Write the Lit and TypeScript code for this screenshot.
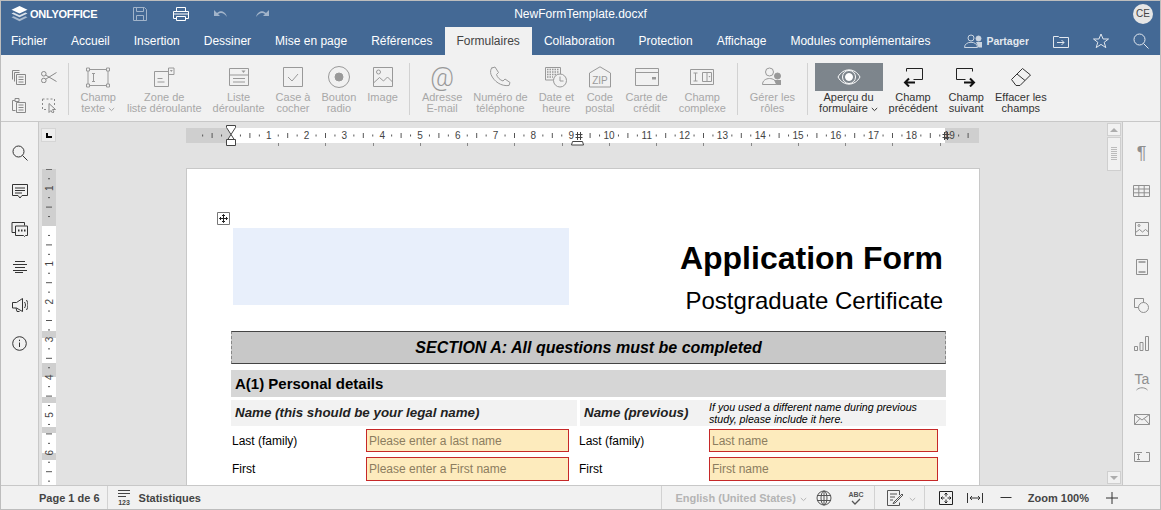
import {css, html, svg, LitElement} from "lit";
import {customElement} from "lit/decorators.js";

const ico = (w: number, h: number, body: unknown) => html`<svg class="ico" width=${w} height=${h} viewBox="0 0 ${w} ${h}" fill="none" stroke="currentColor" stroke-width="1">${body}</svg>`;

const chevron = html`<svg class="chev" width="7" height="5" viewBox="0 0 7 5" fill="none" stroke="currentColor"><path d="M.8 1l2.700 2.600L6.200 1"/></svg>`;

const icons: Record<string, unknown> = {
    logo: ico(17, 16, svg`<path d="M8.500 0l8 3.800-8 3.800-8-3.800z" fill="#fff" stroke="none"/><path d="M2.600 6.500l5.900 2.800 5.900-2.800 2.100 1-8 3.800-8-3.800z" fill="#fff" fill-opacity=".8" stroke="none"/><path d="M2.600 10.300l5.900 2.800 5.900-2.800 2.100 1-8 3.900-8-3.900z" fill="#fff" fill-opacity=".55" stroke="none"/>`),
    save: ico(16, 16, svg`<path d="M1.500 1.500h11l2 2v11h-13zM4.500 1.500v4h7v-4M4.500 14.500v-5h7v5"/>`),
    print: ico(18, 16, svg`<path d="M4.500 5V1.500h9V5M4.500 12.500h-3v-7h15v7h-3M4.500 10.500h9v4h-9zM1.500 8h15"/>`),
    undo: ico(16, 10, svg`<path d="M1 1v6h6L5 5c3-2 6-1 9 3-1-5-6-8-10-4z" fill="currentColor" stroke="none"/>`),
    redo: ico(16, 10, svg`<path d="M15 1v6H9l2-2c-3-2-6-1-9 3 1-5 6-8 10-4z" fill="currentColor" stroke="none"/>`),
    share: ico(20, 14, svg`<circle cx="8" cy="4" r="3"/><path d="M1.500 13.500c0-7 13-7 13 0z"/><circle cx="15.500" cy="4.500" r="2.500" fill="currentColor"/><path d="M13 8h6v5.500h-3.500z" fill="currentColor" stroke="none"/>`),
    move: ico(16, 14, svg`<path d="M.5 2.500h5l1 1h9v10h-15zM4 8.500h7M8.500 6l2.500 2.500-2.500 2.500"/>`),
    star: ico(16, 16, svg`<path d="M8 1l2.100 5h5.400l-4.300 3.300 1.600 5.300L8 11.400l-4.800 3.200 1.600-5.300L.5 6h5.400z"/>`),
    search: ico(16, 16, svg`<circle cx="6.500" cy="6.500" r="5.500"/><path d="M10.500 10.500l5 5"/>`),
    copy: ico(16, 16, svg`<path d="M1.500 10.500v-9h7M3.500 12.500v-9h5M5.500 5.500h9v10h-9zM7.500 8h5M7.500 10.500h5M7.500 13h5"/>`),
    cut: ico(16, 12, svg`<circle cx="2.800" cy="2.800" r="2.300"/><circle cx="2.800" cy="9.500" r="2.300"/><path d="M4.500 4l11 6.500M4.500 8.300l11-6.800"/>`),
    paste: ico(16, 16, svg`<path d="M4 3.500H1.500v10h3M4 1.500h4v3H4zM5.500 5.500h9v10h-9zM7.500 8h5M7.500 10.500h5M7.500 13h5"/>`),
    select: ico(16, 16, svg`<path d="M1.500 2v10.500h5M1.500 2h12v6" stroke-dasharray="2 2"/><path d="M8 6.500v9l2-2 1.500 2.500 1.500-1-1.500-2.500h3z"/>`),
    field: ico(26, 22, svg`<path d="M3 3.500h20v16H3z"/><path d="M1.500 2h3v3h-3zM21.500 2h3v3h-3zM1.500 18h3v3h-3zM21.500 18h3v3h-3z" fill="#f1f1f1"/><path d="M7 7.500h3M8.500 7.500v8M7 15.500h3"/>`),
    combo: ico(22, 20, svg`<path d="M15.500 5.500V19.500h-14v-15h14M15.500 1h5.500v6.500h-5.500M15.500 1v6.500"/><path d="M16.800 3h3l-1.500 2z" fill="currentColor" stroke="none"/><path d="M4.500 11.500h5M4.500 15h7"/>`),
    list: ico(22, 20, svg`<path d="M1.500 1.500h19v17h-19zM1.500 8h19M5 11.500h12M5 15h12"/><path d="M13.500 3.500h4l-2 2.500z" fill="currentColor" stroke="none"/>`),
    check: ico(22, 22, svg`<path d="M1.500 1.500h19v19h-19zM6 11l4 4 6-7"/>`),
    radio: ico(24, 24, svg`<circle cx="12" cy="12" r="10.500"/><circle cx="12" cy="12" r="4" fill="currentColor"/>`),
    image: ico(22, 22, svg`<path d="M1.500 1.500h19v19h-19z"/><circle cx="6.500" cy="6" r="2"/><path d="M1.500 17l6-5.500 4 3.500 4-4 5 5"/>`),
    phone: ico(22, 22, svg`<path d="M3 1.500l3-1 3.500 5.500-2 2c.8 3 3.500 5.500 6.500 6.500l2-2 5 3.500-1 3c-8 1-15-4-18-11-.8-2.500-.5-5 1-7z" transform="translate(0 .5)"/>`),
    date: ico(24, 22, svg`<path d="M1.500 1.500h15v12.500h-15z"/><path d="M3 3.500h12M3 6h12M3 8.500h12M3 11h6" stroke-dasharray="1.500 1" stroke-width="1.500"/><circle cx="16" cy="14.500" r="6.500" fill="#f1f1f1"/><path d="M16 10.500v4.500h3.500"/>`),
    zip: ico(24, 22, svg`<path d="M1.500 21h21V7L12 .8 1.500 7z"/><text x="12" y="18" text-anchor="middle" font-family="Liberation Sans" font-size="10" fill="currentColor" stroke="none">ZIP</text>`),
    card: ico(26, 20, svg`<path d="M1.500 1.500h23v17h-23zM1.500 5.500h23"/><path d="M18 10h4v2.500h-4z" fill="currentColor" stroke="none"/>`),
    complex: ico(26, 18, svg`<path d="M1.500 1.500h23v15h-23zM13.500 4.500h9v9h-9zM18 4.500v9M4.500 5h4M6.500 5v8M4.500 13h4"/><path d="M19.500 8h2l-1 1.500z" fill="currentColor" stroke="none"/>`),
    roles: ico(22, 20, svg`<circle cx="8.500" cy="5" r="4"/><path d="M1.500 17.500c0-8 14-8 14 0z"/><circle cx="16.500" cy="9" r="3" fill="currentColor"/><path d="M13 13h7v5h-4.500z" fill="currentColor" stroke="none"/>`),
    eye: ico(24, 18, svg`<path d="M1 9c5-9.500 17-9.500 22 0-5 9.500-17 9.500-22 0z"/><circle cx="12" cy="9" r="6.500"/><circle cx="12" cy="9" r="3.500" fill="currentColor"/>`),
    prev: ico(22, 20, svg`<path d="M4.500 1.500h16v11h-9" stroke="#222"/><path d="M4.500 1.500v3" stroke="#222"/><path d="M13 15.500H3M7 11.500l-4 4 4 4" stroke="#111" stroke-width="2"/>`),
    next: ico(22, 20, svg`<path d="M17.500 1.500h-16v11h9" stroke="#222"/><path d="M17.500 1.500v3" stroke="#222"/><path d="M9 15.500h10M15 11.500l4 4-4 4" stroke="#111" stroke-width="2"/>`),
    eraser: ico(22, 20, svg`<path d="M1.500 12.500L12.500 1.500l8 6.500-10.500 10.500H6z"/><path d="M7 7l8 6.500"/>`),
    comment: ico(16, 15, svg`<path d="M.5.500h15v11h-5.500l-2 2.500-2-2.500H.5zM3 4h10M3 6.500h10M3 9h7"/>`),
    chat: ico(17, 15, svg`<path d="M4.500 10.500H1V.500h12.500v3"/><path d="M4.500 4h12v9.500h-2l-1 1-1-1h-8z" fill="#f1f1f1"/><path d="M7 8.500h1.500M10 8.500h1.500M13 8.500h1.500" stroke-width="2"/>`),
    lines: ico(14, 12, svg`<path d="M2 .5h10M0 3.500h14M2 6.500h10M0 9.500h14M2 11.500h8"/>`),
    speaker: ico(16, 14, svg`<path d="M.5 4.500h4l6-4v13l-6-3.500h-4zM4 10l1 3.500h2.500M12.500 4c1.300 1.800 1.300 4.200 0 6M14.500 2c2 3 2 7 0 10"/>`),
    info: ico(15, 15, svg`<circle cx="7.500" cy="7.500" r="6.800"/><path d="M7.500 6.500v4.500M7.500 3.700v1.400"/>`),
    table: ico(17, 12, svg`<path d="M.5.500h16v11H.5zM.5 4h16M.5 7.800h16M5.800.5v11M11.200.5v11"/>`),
    rimage: ico(14, 14, svg`<path d="M.5.500h13v13H.5z"/><circle cx="4" cy="3.500" r="1"/><path d="M.5 10.500l4-3 3 2.500 3-2.500 3 2.500"/>`),
    header: ico(12, 16, svg`<path d="M.5.500h11v15H.5z"/><path d="M2.500 3h7M2.500 13h7" stroke-width="1.500"/>`),
    shape: ico(15, 15, svg`<path d="M.5.500h9v9h-9z"/><circle cx="9.500" cy="9.500" r="5" fill="#f1f1f1"/>`),
    chart: ico(15, 15, svg`<path d="M.5 10.500h3v4h-3zM6 6.500h3v8H6zM11.500.5h3v14h-3z"/>`),
    ta: ico(20, 20, svg`<text x="10" y="13" text-anchor="middle" font-family="Liberation Sans" font-size="14" fill="currentColor" stroke="none">Ta</text><path d="M4.500 19c3-3 8-3 11 0"/>`),
    mail: ico(16, 11, svg`<path d="M.5.500h15v10H.5zM.5.500l7.500 5.500 7.500-5.500M.5 10.500l5.500-6M15.500 10.500L10 4.500"/>`),
    form: ico(16, 10, svg`<path d="M.5.500h15v9H.5z"/><path d="M3 2.500h3M4.500 2.500v5M3 7.500h3"/><path d="M8 .5h4" stroke="#f1f1f1"/>`),
    stats: ico(13, 15, svg`<path d="M0 .5h12M0 3.500h12M0 6.500h8"/><text x="6" y="14.500" text-anchor="middle" font-family="Liberation Sans" font-size="7" fill="currentColor" stroke="none">123</text>`),
    globe: ico(16, 16, svg`<circle cx="8" cy="8" r="7"/><ellipse cx="8" cy="8" rx="3" ry="7"/><path d="M1 5.500h14M1 10.500h14M8 1v14"/>`),
    spell: ico(16, 16, svg`<text x="8" y="7" text-anchor="middle" font-family="Liberation Sans" font-size="7" fill="currentColor" stroke="none">ABC</text><path d="M4 11l3 3 5-5" stroke-width="1.300"/>`),
    edit: ico(16, 16, svg`<path d="M12.500 5V.5h-12v15h12v-3M3 4h7M3 7h5M3 10h3"/><path d="M7 12l8-8 1 1-8 8-2 .5z"/>`),
    fitpage: ico(14, 14, svg`<path d="M.5.500h13v13H.5zM7 2.500v3M5.500 3.500L7 2l1.500 1.500M7 11.500v-3M5.500 10.500L7 12l1.500-1.500M2.500 7h3M3.500 5.500L2 7l1.500 1.500M11.500 7h-3M10.500 5.500L12 7l-1.500 1.500"/>`),
    fitwidth: ico(16, 12, svg`<path d="M.5 1v10M15.500 1v10M3 6h10M5 4L3 6l2 2M11 4l2 2-2 2"/>`),
    minus: ico(12, 3, svg`<path d="M.5 1.500h11"/>`),
    plus: ico(12, 12, svg`<path d="M0 6h12M6 0v12"/>`),
    moveTable: ico(13, 13, svg`<path d="M.5.500h12v12H.5z" stroke="#777"/><path d="M6.500 2.500v8M2.500 6.500h8M5 4l1.500-1.500L8 4M5 9l1.500 1.500L8 9M4 5L2.500 6.500 4 8M9 5l1.500 1.500L9 8" stroke="#222"/>`),
};

type Tool = {icon: string; lines: string[]; chevron?: boolean};

const formTools: Tool[][] = [
    [
        {icon: "field", lines: ["Champ", "texte"], chevron: true},
        {icon: "combo", lines: ["Zone de", "liste déroulante"]},
        {icon: "list", lines: ["Liste", "déroulante"]},
        {icon: "check", lines: ["Case à", "cocher"]},
        {icon: "radio", lines: ["Bouton", "radio"]},
        {icon: "image", lines: ["Image"]},
    ],
    [
        {icon: "at", lines: ["Adresse", "E-mail"]},
        {icon: "phone", lines: ["Numéro de", "téléphone"]},
        {icon: "date", lines: ["Date et", "heure"]},
        {icon: "zip", lines: ["Code", "postal"]},
        {icon: "card", lines: ["Carte de", "crédit"]},
        {icon: "complex", lines: ["Champ", "complexe"]},
    ],
    [{icon: "roles", lines: ["Gérer les", "rôles"]}],
];

const tabs = ["Fichier", "Accueil", "Insertion", "Dessiner", "Mise en page", "Références", "Formulaires", "Collaboration", "Protection", "Affichage", "Modules complémentaires"];
const leftIcons = ["search", "comment", "chat", "lines", "speaker", "info"];
const rightIcons = ["para", "table", "rimage", "header", "shape", "chart", "ta", "mail", "form"];

const CM = 37.8;

// table column marker, the hatched one on the ruler
const hatch = (x: number) => svg`<path d="M${x - 1.500} 4v8M${x + 1.500} 4v8M${x - 3.500} 6.500h7M${x + -3.500} 9.500h7" stroke="#444"/>`;

function hRuler() {
    const marks = [];
    for (let q = -3; q <= 78; q++) {
        const x = 45 + q * CM / 4;
        if (x > 790) break;
        if (q % 4 === 0) {
            const n = Math.abs(q / 4);
            if (n > 0) marks.push(svg`<text x=${x} y="11" text-anchor="middle">${n}</text>`);
        } else {
            const h = q % 2 === 0 ? 5 : 2;
            marks.push(svg`<path d="M${x} ${7.500 - h / 2}v${h}" stroke="#555"/>`);
        }
    }
    for (let i = 1; i < 16; i++) {
        const x = Math.round(45 + i * 47.24) + .5;
        marks.push(svg`<path d="M${x} 15v3" stroke="#888"/>`);
    }
    return html`<svg class="hruler" width="794" height="15" viewBox="0 0 794 15" font-family="Liberation Sans" font-size="10" fill="#444">
        <rect width="793" height="15" fill="#cfcfcf"/>
        <rect x="45" width="714" height="15" fill="#fff"/>
        ${marks}
        <path d="M40.500 -2.500h9v2l-4.500 7 4.500 7v3h-9v-3l4.500-7-4.500-7z" fill="#fff" stroke="#444"/>
        <path d="M40.500 11.500h9v6h-9z" fill="#fff" stroke="#444"/>
        ${hatch(393)}
        <path d="M386.500 13.500h10l1 3.500h-12z" fill="#fff" stroke="#444"/>
        ${hatch(760)}
    </svg>`;
}

function vRuler() {
    const marks = [];
    const origin = 57;
    for (let q = -6; q <= 27; q++) {
        const y = origin + q * CM / 4;
        if (q % 4 === 0) {
            const n = Math.abs(q / 4);
            if (n > 0) marks.push(svg`<text transform="translate(10.500 ${y}) rotate(-90)" text-anchor="middle">${n}</text>`);
        } else {
            const w = q % 2 === 0 ? 6 : 2;
            marks.push(svg`<path d="M${7 - w / 2} ${y}h${w}" stroke="#555"/>`);
        }
    }
    const bands = [[162, 7], [194, 14], [228, 6], [258, 6], [284, 7]];
    return html`<svg class="vruler" width="14" height="316" viewBox="0 0 14 316" font-family="Liberation Sans" font-size="10" fill="#444">
        <rect width="14" height="316" fill="#fff"/>
        <rect width="14" height="57" fill="#cfcfcf"/>
        ${bands.map(([y, h]) => svg`<rect y=${y} width="14" height=${h} fill="#cfcfcf"/>`)}
        ${marks}
    </svg>`;
}

@customElement('app-root')
class AppRoot extends LitElement {
    static styles = css`
    :host {
        display: flex;
        flex-direction: column;
        box-sizing: border-box;
        width: 1161px;
        height: 510px;
        overflow: hidden;
        border: 1px solid #bdbdbd;
        font-family: "Liberation Sans", Arial, sans-serif;
        font-size: 11px;
        color: #444;
        background: #f1f1f1;
    }

    .ico {
        display: block;
        flex: none;
    }

    .chev {
        display: inline-block;
        margin-left: 3px;
        vertical-align: 0;
    }

    .head {
        background: #446995;
        color: #fff;
    }

    .title {
        height: 26px;
        display: grid;
        grid-template-columns: 1fr auto 1fr;
        align-items: center;
    }

    .title-left {
        display: flex;
        align-items: center;
    }

    .logo {
        display: flex;
        align-items: center;
        gap: 2px;
        margin-left: 10px;
        width: 110px;
        font-size: 11px;
        letter-spacing: -.25px;
        font-weight: 700;
    }

    .quick {
        display: flex;
        align-items: center;
    }

    .quick .faded {
        opacity: .5;
    }

    .docname {
        font-size: 12px;
    }

    .avatar {
        justify-self: end;
        width: 20px;
        height: 20px;
        margin-right: 7px;
        border-radius: 50%;
        background: #e6e6e6;
        color: #444;
        font-size: 10px;
        line-height: 20px;
        text-align: center;
    }

    .tabbar {
        height: 28px;
        display: flex;
        align-items: stretch;
        font-size: 12px;
        margin-left: -2px;
    }

    .tab {
        padding: 0 12px;
        line-height: 28px;
    }

    .tab.on {
        background: #f1f1f1;
        color: #444;
    }

    .tab-actions {
        margin-left: auto;
        display: flex;
        align-items: center;
    }

    .share {
        display: flex;
        align-items: center;
        gap: 3px;
        font-size: 10.500px;
        font-weight: 700;
        opacity: .85;
        margin-right: 24px;
    }

    .tab-actions .ico {
        opacity: .85;
    }

    .toolbar {
        flex: none;
        height: 67px;
        box-sizing: border-box;
        padding-top: 8px;
        display: flex;
        border-bottom: 1px solid #c8c8c8;
    }

    .clip {
        display: grid;
        grid-template-columns: 30px 30px;
        grid-template-rows: 28px 28px;
        justify-items: center;
        align-items: center;
        padding-left: 3px;
        width: 67px;
        box-sizing: border-box;
        opacity: .6;
    }

    .sep {
        flex: none;
        width: 1px;
        height: 52px;
        background: #d2d2d2;
    }

    .group {
        display: flex;
        gap: 11px;
        padding: 0 11.500px;
    }

    .group.last {
        padding: 0 0 0 7px;
    }

    .tool {
        display: flex;
        flex-direction: column;
        align-items: center;
        white-space: nowrap;
    }

    .tool.off {
        color: #a8a8a8;
    }

    .tool.off .pic {
        opacity: .5;
        color: #444;
    }

    .pic {
        width: 100%;
        height: 28px;
        display: flex;
        align-items: center;
        justify-content: center;
    }

    .at {
        font-family: Roboto, "Liberation Sans", sans-serif;
        font-size: 26px;
        font-weight: 300;
        line-height: 28px;
    }

    .lab {
        line-height: 11px;
        text-align: center;
        padding-top: 1px;
    }

    .tool.live {
        color: #333;
    }

    .preview {
        width: 68px;
        margin-right: -5px;
    }

    .preview .pic {
        background: #7d858c;
        color: #fff;
    }

    .main {
        flex: 1;
        min-height: 0;
        display: flex;
    }

    .side {
        flex: none;
        box-sizing: border-box;
        display: flex;
        flex-direction: column;
        align-items: center;
        padding-top: 12px;
    }

    .side > div {
        height: 38px;
        flex: none;
        display: flex;
        align-items: center;
        justify-content: center;
    }

    .side.left {
        width: 38px;
        border-right: 1px solid #c8c8c8;
        color: #333;
    }

    .side.right {
        width: 38px;
        border-left: 1px solid #c8c8c8;
        color: #8f8f8f;
    }

    .glyph {
        font-size: 18px;
    }

    .canvas {
        flex: 1;
        min-width: 0;
        background: #e2e2e2;
        display: grid;
        grid-template-columns: 147px 794px 1fr 14px 1px;
        grid-template-rows: 46px 1fr;
        overflow: hidden;
    }

    .corner {
        width: 15px;
        height: 14px;
        margin: 6px 0 0 2px;
        background: #ececec;
        border: 1px solid #d5d5d5;
        box-sizing: border-box;
        display: flex;
        align-items: center;
        justify-content: center;
    }

    .corner i {
        display: block;
        width: 6px;
        height: 5px;
        border-left: 2px solid #000;
        border-bottom: 2px solid #000;
        box-sizing: border-box;
    }

    .hruler {
        grid-column: 2;
        grid-row: 1;
        display: block;
        margin-top: 6px;
        overflow: visible;
    }

    .vruler {
        grid-column: 1;
        grid-row: 2;
        display: block;
        margin: 1px 0 0 3px;
    }

    .scroll {
        grid-column: 4;
        grid-row: 1 / 3;
        display: flex;
        flex-direction: column;
        padding: 1px 0;
    }

    .scroll b {
        display: flex;
        align-items: center;
        justify-content: center;
        height: 13px;
        box-sizing: border-box;
        background: #f1f1f1;
        border: 1px solid #cfcfcf;
    }

    .scroll b i {
        width: 0;
        height: 0;
        border-left: 4px solid transparent;
        border-right: 4px solid transparent;
    }

    .scroll .up i {
        border-bottom: 4px solid #adadad;
    }

    .scroll .down i {
        border-top: 4px solid #adadad;
    }

    .scroll .thumb {
        margin-top: 1px;
        height: 34px;
        box-sizing: border-box;
        background: #f1f1f1;
        border: 1px solid #cfcfcf;
        display: flex;
        align-items: center;
        justify-content: center;
    }

    .scroll .thumb i {
        width: 6px;
        height: 14px;
        background: repeating-linear-gradient(#bbb 0 1px, transparent 1px 2px);
    }

    .scroll .fill {
        flex: 1;
    }

    .page {
        position: relative;
        grid-column: 2;
        grid-row: 2;
        background: #fff;
        border: 1px solid #c8c8c8;
        border-bottom: 0;
        box-sizing: border-box;
        padding: 59px 33px 0 44px;
        color: #000;
        overflow: hidden;
    }

    .handle {
        position: absolute;
        left: 30px;
        top: 43px;
    }

    .sheet-head {
        display: flex;
        justify-content: space-between;
        height: 103px;
    }

    .placeholder {
        width: 336px;
        height: 77px;
        margin-left: 2px;
        background: #e8effb;
    }

    .heading {
        margin-right: 3px;
        padding-top: 12px;
        text-align: right;
    }

    .heading h1 {
        margin: 0;
        font-size: 32px;
        line-height: 37px;
        font-weight: 700;
    }

    .heading p {
        margin: 10px 0 0;
        font-size: 24px;
        line-height: 28px;
    }

    .section {
        height: 33px;
        box-sizing: border-box;
        background: #c8c8c8;
        border-top: 1px solid #444;
        border-bottom: 1px solid #444;
        border-left: 1px dashed #888;
        border-right: 1px dashed #888;
        text-align: center;
        font-size: 16px;
        line-height: 31px;
        font-weight: 700;
        font-style: italic;
    }

    .sub {
        margin-top: 6px;
        height: 27px;
        background: #d6d6d6;
        padding-left: 4px;
        font-size: 15px;
        line-height: 27px;
        font-weight: 700;
    }

    .names {
        margin-top: 3px;
        display: grid;
        grid-template-columns: 346px 366px;
        gap: 3px;
        height: 26px;
    }

    .names > div {
        background: #f2f2f2;
        font-size: 13.330px;
        line-height: 26px;
        font-weight: 700;
        font-style: italic;
        padding-left: 4px;
        color: #222;
    }

    .names .prev {
        display: grid;
        grid-template-columns: 125px 1fr;
    }

    .names small {
        font-size: 10.670px;
        line-height: 12px;
        font-weight: 400;
        padding-top: 1px;
        white-space: nowrap;
        color: #000;
    }

    .rows {
        margin-top: 3px;
        display: grid;
        grid-template-columns: 134px 203px 140px 229px;
        grid-template-rows: 23px 24px;
        column-gap: 0;
        row-gap: 5px;
        padding-left: 1px;
        font-size: 12px;
    }

    .rows > span {
        align-self: center;
    }

    .rows > span:nth-of-type(2n) {
        padding-left: 10px;
    }

    .rows .input {
        display: flex;
        align-items: center;
        box-sizing: border-box;
        background: #fdebbd;
        border: 1px solid #c62828;
        padding-left: 2px;
        color: #8c7d5f;
    }

    .status {
        flex: none;
        height: 24px;
        box-sizing: border-box;
        border-top: 1px solid #c8c8c8;
        display: flex;
        align-items: center;
        font-weight: 700;
        color: #444;
    }

    .status .vr {
        width: 1px;
        height: 24px;
        background: #d2d2d2;
        flex: none;
    }

    .cell {
        display: flex;
        align-items: center;
    }

    .lang {
        color: #b4b4b4;
    }

    .lang .ico {
        color: #555;
    }
    `

    private tool(t: Tool) {
        const pic = t.icon === "at" ? html`<span class="at">@</span>` : icons[t.icon];
        return html`<div class="tool off">
            <div class="pic">${pic}</div>
            <div class="lab">${t.lines.map((l, i) => html`${i ? html`<br>` : ""}${l}`)}${t.chevron ? chevron : ""}</div>
        </div>`;
    }

    render() {
        return html`
            <div class="head">
                <div class="title">
                    <div class="title-left">
                        <div class="logo">${icons.logo}<span>ONLYOFFICE</span></div>
                        <div class="quick">
                            <span class="faded" style="margin-left:11px">${icons.save}</span>
                            <span style="margin-left:24px">${icons.print}</span>
                            <span class="faded" style="margin-left:23px">${icons.undo}</span>
                            <span class="faded" style="margin-left:25px">${icons.redo}</span>
                        </div>
                    </div>
                    <div class="docname">NewFormTemplate.docxf</div>
                    <div class="avatar">CE</div>
                </div>
                <div class="tabbar">
                    ${tabs.map(t => html`<div class="tab ${t === "Formulaires" ? "on" : ""}">${t}</div>`)}
                    <div class="tab-actions">
                        <div class="share">${icons.share}<span>Partager</span></div>
                        <span style="margin-right:24px">${icons.move}</span>
                        <span style="margin-right:24px">${icons.star}</span>
                        <span style="margin-right:11px">${icons.search}</span>
                    </div>
                </div>
            </div>
            <div class="toolbar">
                <div class="clip">${icons.copy}${icons.cut}${icons.paste}${icons.select}</div>
                <div class="sep"></div>
                ${formTools.map(g => html`<div class="group">${g.map(t => this.tool(t))}</div><div class="sep"></div>`)}
                <div class="group last">
                    <div class="tool live preview">
                        <div class="pic">${icons.eye}</div>
                        <div class="lab">Aperçu du<br>formulaire${chevron}</div>
                    </div>
                    <div class="tool live"><div class="pic">${icons.prev}</div><div class="lab">Champ<br>précédent</div></div>
                    <div class="tool live"><div class="pic">${icons.next}</div><div class="lab">Champ<br>suivant</div></div>
                    <div class="tool live"><div class="pic">${icons.eraser}</div><div class="lab">Effacer les<br>champs</div></div>
                </div>
            </div>
            <div class="main">
                <div class="side left">${leftIcons.map(i => html`<div>${icons[i]}</div>`)}</div>
                <div class="canvas">
                    <div class="corner"><i></i></div>
                    ${hRuler()}
                    ${vRuler()}
                    <div class="page">
                        <span class="handle">${icons.moveTable}</span>
                        <div class="sheet-head">
                            <div class="placeholder"></div>
                            <div class="heading">
                                <h1>Application Form</h1>
                                <p>Postgraduate Certificate</p>
                            </div>
                        </div>
                        <div class="section">SECTION A: All questions must be completed</div>
                        <div class="sub">A(1) Personal details</div>
                        <div class="names">
                            <div>Name (this should be your legal name)</div>
                            <div class="prev">
                                <span>Name (previous)</span>
                                <small>If you used a different name during previous<br>study, please include it here.</small>
                            </div>
                        </div>
                        <div class="rows">
                            <span>Last (family)</span><div class="input">Please enter a last name</div>
                            <span>Last (family)</span><div class="input">Last name</div>
                            <span>First</span><div class="input">Please enter a First name</div>
                            <span>First</span><div class="input">First name</div>
                        </div>
                    </div>
                    <div class="scroll">
                        <b class="up"><i></i></b>
                        <div class="thumb"><i></i></div>
                        <div class="fill"></div>
                        <b class="down"><i></i></b>
                    </div>
                </div>
                <div class="side right">
                    ${rightIcons.map(i => html`<div>${i === "para" ? html`<span class="glyph">¶</span>` : icons[i]}</div>`)}
                </div>
            </div>
            <div class="status">
                <span style="margin-left:38px">Page 1 de 6</span>
                <span class="vr" style="margin-left:7px"></span>
                <span style="margin-left:10px">${icons.stats}</span>
                <span style="margin-left:8px">Statistiques</span>
                <span class="vr" style="margin-left:auto"></span>
                <div class="cell lang">
                    <span style="margin-left:13px">English (United States)</span>
                    <span style="margin-left:1px">${chevron}</span>
                    <span style="margin-left:9px">${icons.globe}</span>
                    <span style="margin-left:16px">${icons.spell}</span>
                </div>
                <span class="vr" style="margin-left:10px"></span>
                <div class="cell lang">
                    <span style="margin-left:12px">${icons.edit}</span>
                    <span style="margin-left:3px">${chevron}</span>
                </div>
                <span class="vr" style="margin-left:8px"></span>
                <span style="margin-left:14px;color:#222">${icons.fitpage}</span>
                <span style="margin-left:14px;color:#333">${icons.fitwidth}</span>
                <span style="margin-left:17px;color:#333">${icons.minus}</span>
                <span style="margin-left:16px">Zoom 100%</span>
                <span style="margin-left:17px;margin-right:42px;color:#333">${icons.plus}</span>
            </div>
        `
    }
}
